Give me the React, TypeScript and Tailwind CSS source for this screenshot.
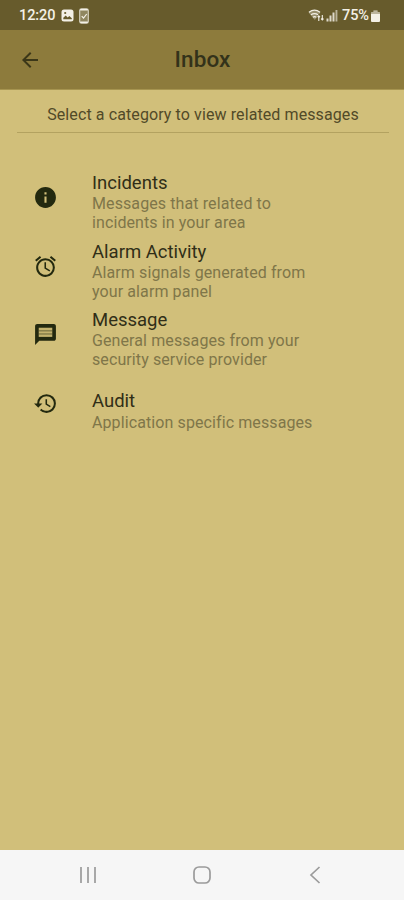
import type { ReactNode } from "react";
import { MdAlarm, MdArrowBack, MdHistory, MdInfo } from "react-icons/md";

type Category = {
  title: string;
  lines: string[];
  icon: ReactNode;
};

function MessageIcon() {
  return (
    <svg width="25" height="25" viewBox="0 0 24 24">
      <path d="M20 2H4c-1.1 0-1.99.9-1.99 2L2 22l4-4h14c1.1 0 2-.9 2-2V4c0-1.1-.9-2-2-2z" fill="currentColor" />
      <path d="M5.5 5.5h13v8.8h-13z" fill="#c3b26d" />
      <path d="M5.5 8.5h13M5.5 11.5h13" stroke="currentColor" strokeWidth="0.9" strokeOpacity="0.6" />
    </svg>
  );
}

const categories: Category[] = [
  {
    title: "Incidents",
    lines: ["Messages that related to", "incidents in your area"],
    icon: <MdInfo size={25} />,
  },
  {
    title: "Alarm Activity",
    lines: ["Alarm signals generated from", "your alarm panel"],
    icon: <MdAlarm size={25} />,
  },
  {
    title: "Message",
    lines: ["General messages from your", "security service provider"],
    icon: <MessageIcon />,
  },
  {
    title: "Audit",
    lines: ["Application specific messages"],
    icon: <MdHistory size={25} />,
  },
];

function StatusBar() {
  return (
    <div className="flex h-[30px] shrink-0 items-center bg-[#675b2c] pl-[19px] pr-[24px] pt-px text-[#f3f0e6]">
      <span className="w-[37px] whitespace-nowrap text-[14.5px] font-medium tracking-[-0.1px]">12:20</span>
      <svg className="ml-[5px]" width="13" height="13" viewBox="0 0 13 13">
        <rect x="0.5" y="0.5" width="12" height="12" rx="2.5" fill="currentColor" />
        <path d="M2.3 10.3V8.8l2.4-2.2 2 1.8 1.6-1.5 2.5 2.4v1z" fill="#675b2c" />
        <circle cx="4.2" cy="4" r="1.1" fill="#675b2c" />
      </svg>
      <svg className="ml-[5px]" width="10" height="16" viewBox="0 0 10 16">
        <rect x="0.7" y="0.7" width="8.6" height="14.6" rx="1.8" fill="#8f865f" stroke="currentColor" strokeOpacity="0.8" strokeWidth="1.1" />
        <path d="M1.2 1.8h7.6M1.2 14.2h7.6" stroke="currentColor" strokeWidth="1.6" />
        <path d="M2.7 8.2l1.8 1.8 3.2-4" fill="none" stroke="currentColor" strokeWidth="1.2" />
      </svg>
      <div className="ml-auto flex items-center">
        <svg width="17" height="13" viewBox="0 0 17 13">
          <path d="M0.5 3.5Q6.5-1 12.5 3.5L6.8 11z" fill="currentColor" opacity="0.35" />
          <path d="M1 3.2Q6.5-0.8 12 3.2M3 5.8q3.5-2.5 7 0M5 8.3q1.6-1.2 3.4 0" fill="none" stroke="currentColor" strokeWidth="1.3" />
          <path d="M10.8 12V7M9.2 8.6l1.6-1.8 1.6 1.8M14.3 6v5M12.8 9.4l1.5 1.8 1.5-1.8" fill="none" stroke="#675b2c" strokeWidth="2" />
          <path d="M10.8 12V7M9.6 8.2l1.2-1.4 1.2 1.4M14.3 6v5M13.1 9.6l1.2 1.4 1.2-1.4" fill="none" stroke="currentColor" strokeWidth="1.1" />
        </svg>
        <svg className="ml-px" width="12" height="13" viewBox="0 0 12 13">
          <path d="M0.5 12.5v-3h2v3zM3.5 12.5v-6h2v6zM6.5 12.5v-9h2v9z" fill="currentColor" opacity="0.85" />
          <path d="M9.5 12.5V1h1.9v11.5z" fill="currentColor" opacity="0.6" />
        </svg>
        <span className="ml-[4px] w-[28px] whitespace-nowrap text-[14.5px] font-medium tracking-[-0.1px]">75%</span>
        <svg className="ml-px" width="9" height="12" viewBox="0 0 9 12">
          <path d="M2.5 0.5h4v1.5H8q1 0 1 1V11q0 1-1 1H1q-1 0-1-1V3q0-1 1-1h1.5z" fill="currentColor" />
          <path d="M2.5 0.5h4v1.5H8q1 0 1 1v1H0V3q0-1 1-1h1.5z" fill="#675b2c" opacity="0.4" />
        </svg>
      </div>
    </div>
  );
}

function Header() {
  return (
    <header className="grid h-[60px] shrink-0 grid-cols-[1fr_auto_1fr] items-center border-b border-[#a69450] bg-[#8d7b3c]">
      <MdArrowBack className="ml-[18px] text-[#3b3718]" size={24} />
      <h1 className="pl-px text-[22.5px] font-medium tracking-[0.1px] text-[#33321a]">Inbox</h1>
    </header>
  );
}

function CategoryRow({ title, lines, icon }: Category) {
  const single = lines.length === 1;

  return (
    <li className="flex h-[68.5px] items-center">
      <div className="ml-[33px] w-[59px] shrink-0 text-[#23290f]">{icon}</div>
      <div className={single ? "pt-[14px]" : "pt-[9px]"}>
        <div className={`text-[18.5px] text-[#302e17] ${single ? "leading-[24px]" : "leading-[22px]"}`}>{title}</div>
        {lines.map((line) => (
          <div key={line} className="whitespace-nowrap text-[16px] leading-[19px] tracking-[0.1px] text-[#7f7649]">
            {line}
          </div>
        ))}
      </div>
    </li>
  );
}

function NavBar() {
  return (
    <nav className="grid h-[50px] shrink-0 grid-cols-[176px_51px_176px] items-center justify-items-center bg-[#f6f6f6] text-[#9b9b9b]">
      <svg width="18" height="18" viewBox="0 0 18 18">
        <path d="M2 1v16M9 1v16M16 1v16" stroke="currentColor" strokeWidth="1.7" />
      </svg>
      <svg width="18" height="18" viewBox="0 0 18 18">
        <rect x="1" y="1" width="16" height="16" rx="5" fill="none" stroke="currentColor" strokeWidth="1.7" />
      </svg>
      <svg width="12" height="18" viewBox="0 0 12 18">
        <path d="M10.5 1L2 9l8.5 8" fill="none" stroke="currentColor" strokeWidth="1.7" />
      </svg>
    </nav>
  );
}

export default function App() {
  return (
    <div className="flex h-[900px] w-[404px] flex-col overflow-hidden bg-[#d1bf7a] font-['Roboto',sans-serif]">
      <StatusBar />
      <Header />
      <main className="flex-1">
        <p className="ml-[17px] mr-[15px] h-[43px] border-b border-[#b3a260] pt-[13px] text-center text-[16px] leading-6 tracking-[0.1px] whitespace-nowrap text-[#514a28]">
          Select a category to view related messages
        </p>
        <ul className="mt-[30.5px]">
          {categories.map((category) => (
            <CategoryRow key={category.title} {...category} />
          ))}
        </ul>
      </main>
      <NavBar />
    </div>
  );
}
